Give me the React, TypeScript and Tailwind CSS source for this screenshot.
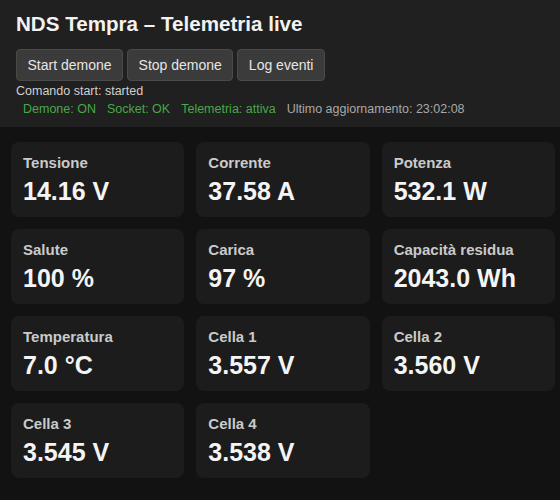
import React from "react";

type Metric = { label: string; value: string };

const METRICS: Metric[] = [
  { label: "Tensione", value: "14.16 V" },
  { label: "Corrente", value: "37.58 A" },
  { label: "Potenza", value: "532.1 W" },
  { label: "Salute", value: "100 %" },
  { label: "Carica", value: "97 %" },
  { label: "Capacità residua", value: "2043.0 Wh" },
  { label: "Temperatura", value: "7.0 °C" },
  { label: "Cella 1", value: "3.557 V" },
  { label: "Cella 2", value: "3.560 V" },
  { label: "Cella 3", value: "3.545 V" },
  { label: "Cella 4", value: "3.538 V" },
];

function Card({ label, value }: Metric) {
  return (
    <div className="rounded-lg bg-[#1c1c1c] px-3 pt-3 pb-3">
      <div className="text-[15px] font-bold leading-[17px] text-[#cacaca]">{label}</div>
      <div className="mt-1.5 text-[25px] font-bold leading-[28px] text-[#f4f4f4]">{value}</div>
    </div>
  );
}

export default function App() {
  return (
    <div className="min-h-[500px] bg-[#121212] font-['Liberation_Sans',Arial,sans-serif]">
      <header className="bg-[#202020] px-4 pt-3 pb-2.5">
        <h1 className="text-[20.6px] font-bold leading-[24px] text-[#f2f2f2]">
          NDS Tempra – Telemetria live
        </h1>
        <div className="mt-[13px] flex gap-1">
          {["Start demone", "Stop demone", "Log eventi"].map((b) => (
            <button
              key={b}
              type="button"
              className="h-8 rounded border border-[#4a4a4a] bg-[#3b3b3b] px-[10.5px] text-[14px] text-[#e6e6e6]"
            >
              {b}
            </button>
          ))}
        </div>
        <div className="mt-[3px] text-[12.5px] leading-[15px] text-[#d0d0d0]">Comando start: started</div>
        <div className="mt-[3px] flex gap-[11px] pl-[7px] text-[12.5px] leading-[15px]">
          <span className="text-[#46a946]">Demone: ON</span>
          <span className="text-[#46a946]">Socket: OK</span>
          <span className="text-[#46a946]">Telemetria: attiva</span>
          <span className="text-[#a8a8a8]">Ultimo aggiornamento: 23:02:08</span>
        </div>
      </header>

      <div className="grid grid-cols-3 gap-3 pt-[15px] pr-[5px] pl-[11px] pb-4">
        {METRICS.map((m) => (
          <Card key={m.label} {...m} />
        ))}
      </div>
    </div>
  );
}
